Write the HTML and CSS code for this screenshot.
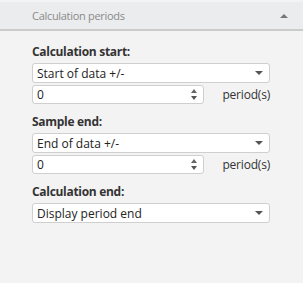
FILE: index.html
```html
<!DOCTYPE html>
<html lang="en">
<head>
    <meta charset="UTF-8">
    <title>Calculation periods</title>
    <link rel="stylesheet" href="styles.css">
</head>
<body>
    <div class="panel">
        <div class="panel-header">
            <span class="panel-title">Calculation periods</span>
            <span class="arrow-up"></span>
        </div>
        <div class="panel-body">
            <div class="field-label">Calculation start:</div>
            <div class="combo">
                <span>Start of data +/-</span>
                <span class="arrow-down"></span>
            </div>
            <div class="number-row">
                <div class="spin">
                    <span>0</span>
                    <span class="spin-arrows"><span class="arrow-up"></span><span class="arrow-down"></span></span>
                </div>
                <span class="unit">period(s)</span>
            </div>

            <div class="field-label">Sample end:</div>
            <div class="combo">
                <span>End of data +/-</span>
                <span class="arrow-down"></span>
            </div>
            <div class="number-row">
                <div class="spin">
                    <span>0</span>
                    <span class="spin-arrows"><span class="arrow-up"></span><span class="arrow-down"></span></span>
                </div>
                <span class="unit">period(s)</span>
            </div>

            <div class="field-label">Calculation end:</div>
            <div class="combo">
                <span>Display period end</span>
                <span class="arrow-down"></span>
            </div>
        </div>
    </div>
</body>
</html>
```

FILE: styles.css
```css
body {
    margin: 0;
    font-family: "Open Sans", "Noto Sans", sans-serif;
    font-size: 12px;
    color: #333;
    background-color: #f3f3f3;
}

.panel {
    height: 283px;
    box-sizing: border-box;
    border-bottom: 1px solid #c4c4c4;
    background-color: #f3f3f3;
}

.panel-header {
    display: flex;
    align-items: center;
    justify-content: space-between;
    height: 27px;
    margin-top: 2px;
    padding: 0 15px 0 32px;
    background-color: #ebecee;
    border-bottom: 2px solid #cbcbcb;
}

.panel-title {
    color: #8a8a8a;
    font-size: 11px;
    letter-spacing: -0.3px;
}

.arrow-up {
    width: 0;
    height: 0;
    border-left: 4px solid transparent;
    border-right: 4px solid transparent;
    border-bottom: 4px solid #777;
}

.arrow-down {
    width: 0;
    height: 0;
    border-left: 4px solid transparent;
    border-right: 4px solid transparent;
    border-top: 4px solid #555;
}

.panel-body {
    padding: 11px 33px 0 32px;
}

.field-label {
    font-weight: bold;
    font-size: 12px;
    letter-spacing: -0.3px;
    color: #333;
    height: 20px;
    line-height: 20px;
}

.combo, .spin {
    display: flex;
    align-items: center;
    justify-content: space-between;
    height: 20px;
    box-sizing: border-box;
    padding: 0 6px 0 4px;
    background-color: #fff;
    border: 1px solid #cfcfcf;
    border-radius: 3px;
    color: #222;
}

.combo {
    margin-top: 1px;
}

.number-row {
    display: flex;
    align-items: center;
    justify-content: space-between;
    margin-top: 2px;
    margin-bottom: 8px;
}

.spin {
    width: 172px;
    height: 19px;
}

.spin-arrows {
    display: flex;
    flex-direction: column;
    gap: 3px;
}

.spin-arrows .arrow-up {
    border-width: 0 3px 4px 3px;
    border-bottom-color: #666;
}

.spin-arrows .arrow-down {
    border-width: 4px 3px 0 3px;
}

.unit {
    color: #333;
    letter-spacing: -0.2px;
}
```
